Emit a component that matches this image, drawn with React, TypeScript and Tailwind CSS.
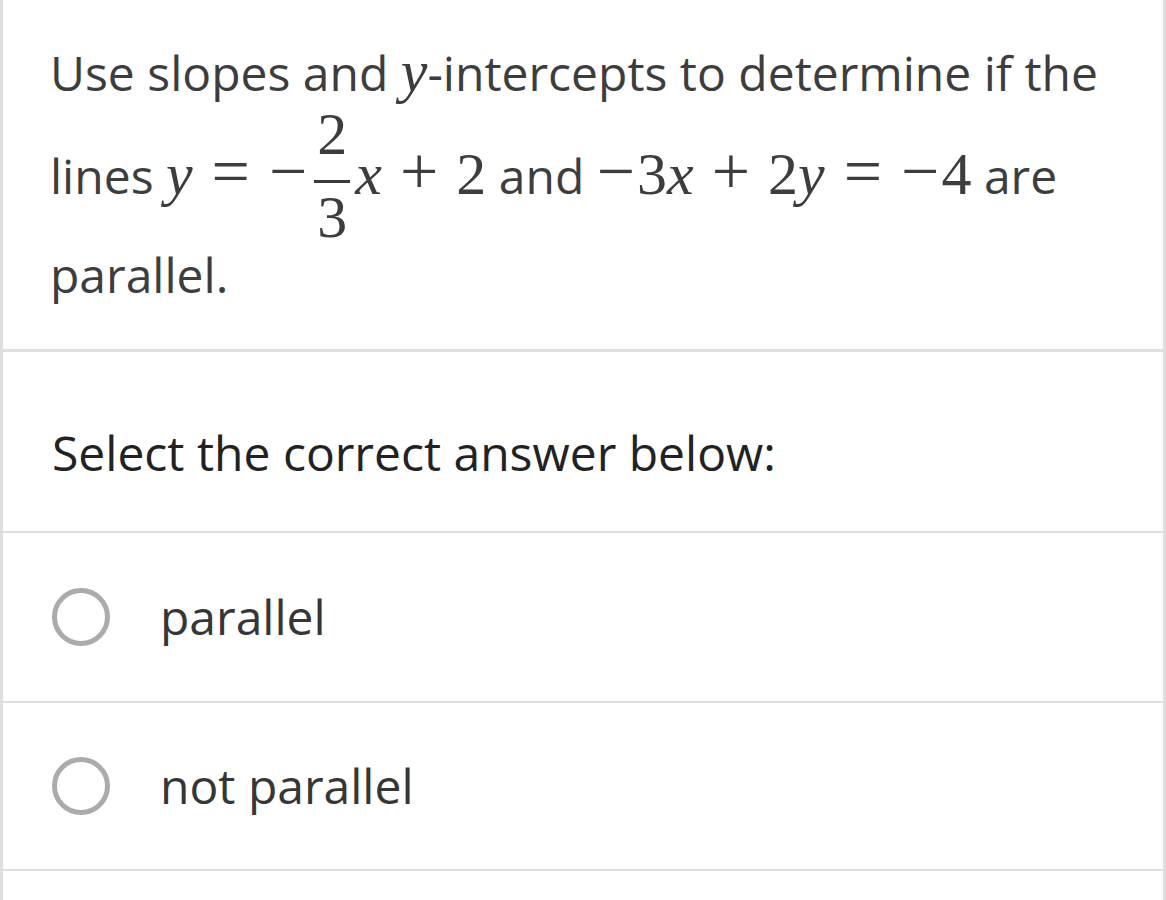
import React from "react";

const sans = { fontFamily: '"Open Sans", "Noto Sans", sans-serif' };
const serif = { fontFamily: '"Liberation Serif", "DejaVu Serif", serif' };

function M({ children, italic }: { children: React.ReactNode; italic?: boolean }) {
  return (
    <span className={`text-[60px] ${italic ? "italic" : ""}`} style={serif}>
      {children}
    </span>
  );
}

function Op({ children, kind }: { children: React.ReactNode; kind: "rel" | "bin" | "un" }) {
  const sp = kind === "rel" ? "mx-[19px]" : kind === "bin" ? "mx-[18px]" : "mr-[2px]";
  return (
    <span className={`text-[68px] ${sp}`} style={serif}>
      {children}
    </span>
  );
}

function Fraction() {
  return (
    <span
      className="inline-flex flex-col items-center align-[40px] text-[60px] leading-none mx-[5px] -my-[25px]"
      style={serif}
    >
      <span className="pb-[16px]">2</span>
      <span className="block w-[36px] h-[3px] bg-[#3a3a3a]"></span>
      <span className="pt-[4px]">3</span>
    </span>
  );
}

function Radio() {
  return (
    <span className="block w-[58px] h-[58px] rounded-full border-[5px] border-[#ababab] shrink-0"></span>
  );
}

export default function App() {
  return (
    <div className="w-[1166px] h-[900px] bg-white overflow-hidden" style={sans}>
      <div className="h-full border-l-[3px] border-r-[3px] border-[#dedede] flex flex-col">
        <div className="h-[352px] border-b-[3px] border-[#e0e0e0] pl-[47px] pr-[48px] pt-[22px]">
          <p className="text-[48px] leading-[99px] text-[#3d3d3d]">
            Use slopes and <M italic>y</M>-intercepts to determine if the lines <M italic>y</M>
            <Op kind="rel">=</Op>
            <Op kind="un">−</Op>
            <Fraction />
            <M italic>x</M>
            <Op kind="bin">+</Op>
            <M>2</M> and <Op kind="un">−</Op>
            <M>3</M>
            <M italic>x</M>
            <Op kind="bin">+</Op>
            <M>2</M>
            <M italic>y</M>
            <Op kind="rel">=</Op>
            <Op kind="un">−</Op>
            <M>4</M> are parallel.
          </p>
        </div>
        <div className="h-[181px] border-b-[2px] border-[#e0e0e0] pl-[49px] pt-[22px] flex items-center">
          <span className="text-[48px] text-[#222222]">Select the correct answer below:</span>
        </div>
        <div className="h-[170px] border-b-[2px] border-[#e0e0e0] pl-[49px] flex items-center">
          <Radio />
          <span className="ml-[50px] text-[48px] text-[#363636]">parallel</span>
        </div>
        <div className="h-[168px] border-b-[2px] border-[#e0e0e0] pl-[49px] flex items-center">
          <Radio />
          <span className="ml-[50px] text-[48px] text-[#363636]">not parallel</span>
        </div>
        <div className="flex-1"></div>
      </div>
    </div>
  );
}
